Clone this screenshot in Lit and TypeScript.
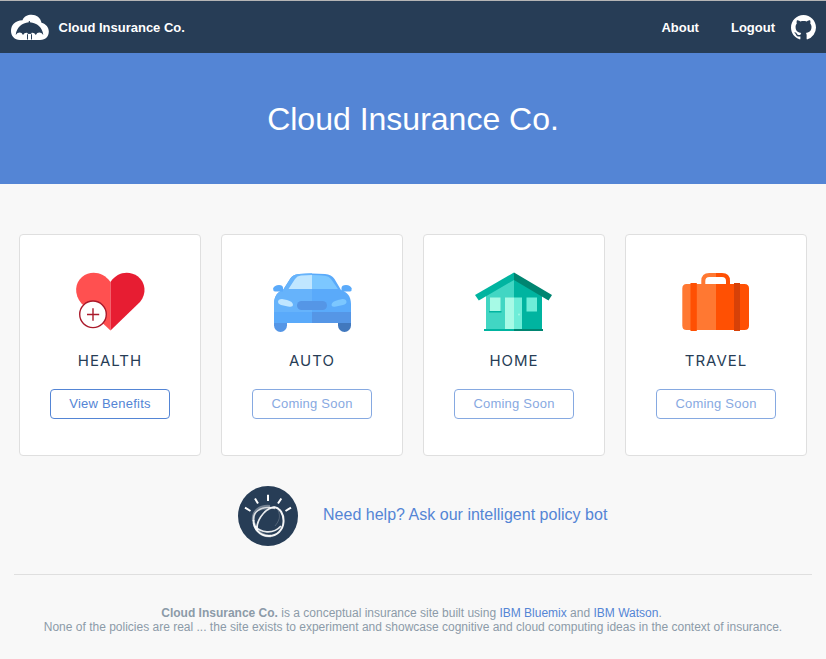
import { LitElement, html, css, svg, SVGTemplateResult } from "lit";
import { customElement, property } from "lit/decorators.js";

const heart = svg`
  <path fill="#ff5050" d="M50.500 70.500L21.500 43.500C13.500 34 15 23 22 17C31 10 43 12 50.500 22Z"/>
  <path fill="#e71d32" d="M50.500 70.500L80 42C87 33.500 85.500 22.500 78 16.500C69 10 57 12 50.500 22Z"/>
  <circle cx="33" cy="54.300" r="13.300" fill="#fff" stroke="#aa1a2b" stroke-width="1.400"/>
  <path d="M27 54.500H39.200M33 48.300V60.700" stroke="#aa1a2b" stroke-width="1.400" fill="none"/>`;

const car = svg`
  <path fill="#5596e6" d="M12 60H25V65.500A6.500 6.500 0 0 1 12 65.500Z"/>
  <path fill="#4178be" d="M76 60H89V65.500A6.500 6.500 0 0 1 76 65.500Z"/>
  <path fill="#5aaafa" d="M12 63V44C12 36 16 31.500 21 30L28 19Q30.500 14.500 37 14Q50 12.800 63 14Q69.500 14.500 72.500 19L79 30C85 32 89 36 89 44V63Z"/>
  <path fill="#66b3fb" d="M12 52V44C12 36 16 31.500 21 30L28 19Q30.500 14.500 37 14Q44 13.300 50 13.300V52Z"/>
  <path fill="#5aaafa" d="M12 52H50V63H12Z"/>
  <path fill="#5596e6" d="M50 52H89V63H50Z"/>
  <path fill="#c0e6ff" d="M26.500 29L33 19Q35 16 39 15.600Q45 15 50 15V29Z"/>
  <path fill="#7cc7ff" d="M50 15Q58 15 63 15.700Q67 16 69 19L76 29H50Z"/>
  <path fill="#5aaafa" d="M11 28.500Q12.500 25 17 25Q21 25 21 28V31.500H13Q11 31 11 28.500Z"/>
  <path fill="#5aaafa" d="M79.500 28Q79.500 25 84 25Q88.500 25 89.700 28.500Q90 31 88 31.500H79.500Z"/>
  <path fill="#c0e6ff" d="M16 42Q16 39 20 39L25 40Q31 41.500 31 45Q31 47.500 26 46.500L19 45Q16 44 16 42Z"/>
  <path fill="#7cc7ff" d="M84.500 42Q84.500 39 80.500 39L76 40Q69.500 41.500 69.500 45Q69.500 47.500 74 46.500L81 45Q84.500 44 84.500 42Z"/>
  <rect x="35" y="41" width="30" height="9" rx="4.500" fill="#5596e6"/>`;

const house = svg`
  <path fill="#41d6c3" d="M22 35L50 18V69H22Z"/>
  <path fill="#00b4a0" d="M50 18L78 35V69H50Z"/>
  <path fill="#00b4a0" d="M50 12.500V20L14.800 40.500L11 35Z"/>
  <path fill="#008571" d="M50 12.500L88 35L84.500 40.500L50 20Z"/>
  <rect x="41" y="37.500" width="9" height="31.500" fill="#a7fae6"/>
  <rect x="50" y="37.500" width="8" height="31.500" fill="#6eedd8"/>
  <rect x="26" y="37.500" width="10.500" height="14" fill="#a7fae6"/>
  <rect x="62.500" y="37.500" width="10.500" height="14" fill="#6eedd8"/>
  <path fill="#00b4a0" d="M25 51H37.500V52.500H25Z"/>
  <circle cx="55" cy="54.500" r=".9" fill="#a7fae6"/>
  <path fill="#00b4a0" d="M20 69H50V71H20Z"/>
  <path fill="#008571" d="M50 69H79V71H50Z"/>`;

const suitcase = svg`
  <path d="M37.300 26V21Q37.300 15 43.300 15H50" fill="none" stroke="#ff7832" stroke-width="4"/>
  <path d="M50 15H56Q62 15 62 21V26" fill="none" stroke="#ff5003" stroke-width="4"/>
  <path fill="#ff7832" d="M50 24H20.500Q16.300 24 16.300 28.500V65.500Q16.300 70 20.500 70H50Z"/>
  <path fill="#ff5003" d="M50 24H78.500Q83 24 83 28.500V65.500Q83 70 78.500 70H50Z"/>
  <rect x="24.500" y="23" width="6.300" height="48" fill="#ff5003"/>
  <rect x="68" y="23" width="6" height="48" fill="#d74108"/>`;

@customElement("policy-card")
class PolicyCard extends LitElement {
  @property() label = "";
  @property() action = "";
  @property({ type: Boolean }) soon = false;
  @property({ attribute: false }) icon?: SVGTemplateResult;

  static styles = css`
    :host {
      display: flex; flex-direction: column; align-items: center;
      box-sizing: border-box; height: 222px; padding-top: 25px;
      background: #fff; border: 1px solid #dfdfdf; border-radius: 4px;
    }
    .icon { width: 100px; height: 80px; flex: none; }
    .label {
      margin-top: 11px; line-height: 20px; font-family: Inter, sans-serif; font-size: 15px;
      letter-spacing: 1px; color: #273d56;
    }
    .button {
      box-sizing: border-box; width: 120px; height: 30px; margin-top: 18px; padding: 0;
      background: #fff; border: 1px solid #5485d5; border-radius: 4px;
      font: 400 13px/28px "Liberation Sans", Arial, sans-serif; letter-spacing: .22px; color: #5485d5;
    }
    .soon { opacity: .7; }
  `;

  render() {
    return html`
      <svg class="icon" viewBox="0 0 100 80">${this.icon}</svg>
      <div class="label">${this.label}</div>
      <button class="button ${this.soon ? "soon" : ""}">${this.action}</button>`;
  }
}

@customElement("app-root")
class AppRoot extends LitElement {
  static styles = css`
    :host {
      display: block; box-sizing: border-box; height: 659px; overflow: hidden;
      background: #f8f8f8; font-family: "Liberation Sans", Arial, sans-serif;
    }
    .bar {
      display: flex; align-items: center; box-sizing: border-box; height: 53px;
      padding: 0 10px 0 11px; border-top: 1px solid #b5b5b5;
      background: #273d56; color: #fff; font-size: 13px; font-weight: 700;
    }
    .logo { width: 38px; height: 26px; margin-right: 9.500px; }
    .brand { flex: 1; }
    .link { margin-right: 32px; }
    .link.last { margin-right: 16px; }
    .github { width: 25px; height: 25px; }
    .hero {
      display: flex; align-items: center; justify-content: center; box-sizing: border-box;
      height: 131px; padding-top: 2px;
      background: #5485d5; color: #fff; font-size: 32px;
    }
    .title { margin: 0; font-size: inherit; font-weight: 400; }
    .cards {
      display: grid; grid-template-columns: repeat(4, 182px); gap: 20px;
      padding: 50px 0 0 19px;
    }
    .help { display: flex; align-items: center; height: 60px; margin: 30px 0 0 238px; }
    .bot { width: 60px; height: 60px; margin-right: 25px; }
    .ask { color: #5485d5; font-size: 16px; letter-spacing: .015px; margin-top: -2px; white-space: nowrap; }
    .footer {
      margin: 28px 14px 0; padding-top: 31px; border-top: 1px solid #dfdfdf;
      text-align: center; color: #8c9ba8; font-size: 12px; line-height: 14px; white-space: nowrap;
    }
    .about { padding-right: 3px; }
    .blue { color: #5485d5; }
  `;

  render() {
    return html`
      <header class="bar">
        <svg class="logo" viewBox="0 0 38 26">
          <path fill="#fff" d="M9 26C3.500 26 0 21.800 0 17C0 11 4 6.500 11.500 6.200C13 2.500 16.500 .8 20.500 .8C25.500 .8 29.500 3.500 30.500 8.800C35 10 37.800 13.500 37.800 17.500C37.800 22 35 26 29 26Z"/>
          <path fill="#273d56" d="M4.700 21C5.500 13.500 11 8.800 17.800 8.200V7H18.900V8.200C26 8.800 31.500 13.500 32.300 21Q30.500 18.600 28.300 18.600Q26 18.600 24.800 21Q23.500 18.800 21.500 18.800Q19.800 18.800 18.500 20Q17 18.800 15.300 18.800Q13.300 18.800 12 21Q10.800 18.600 8.700 18.600Q6.400 18.600 4.700 21Z"/>
          <path fill="none" d="M16.500 25.500V20.500Q16.500 19 18.500 19Q20.500 19 20.500 20.500V25.500" stroke="#273d56" stroke-width="1"/>
          <path d="M18.500 20V26" stroke="#fff" stroke-width="2.600"/>
        </svg>
        <span class="brand">Cloud Insurance Co.</span>
        <span class="link">About</span>
        <span class="link last">Logout</span>
        <svg class="github" viewBox="0 0 16 16"><path fill="#fff" fill-rule="evenodd" d="M8 0C3.580 0 0 3.580 0 8c0 3.540 2.290 6.530 5.470 7.590.4.070.55-.17.55-.38 0-.19-.01-.82-.01-1.490-2.010.37-2.530-.49-2.690-.94-.09-.23-.48-.94-.82-1.130-.28-.15-.68-.52-.01-.53.63-.01 1.080.58 1.230.82.72 1.210 1.870.87 2.330.66.07-.52.28-.87.51-1.070-1.780-.2-3.640-.89-3.640-3.950 0-.87.31-1.590.82-2.150-.08-.2-.36-1.020.08-2.120 0 0 .67-.21 2.200.82.64-.18 1.320-.27 2-.27s1.360.09 2 .27c1.530-1.040 2.200-.82 2.200-.82.44 1.100.16 1.920.08 2.120.51.56.82 1.270.82 2.150 0 3.070-1.870 3.750-3.650 3.950.29.25.54.73.54 1.480 0 1.070-.01 1.930-.01 2.200 0 .21.15.46.55.38A8.010 8.010 0 0 0 16 8c0-4.420-3.580-8-8-8Z"/></svg>
      </header>
      <section class="hero"><h1 class="title">Cloud Insurance Co.</h1></section>
      <main>
        <section class="cards">
          <policy-card label="HEALTH" action="View Benefits" .icon=${heart}></policy-card>
          <policy-card label="AUTO" action="Coming Soon" soon .icon=${car}></policy-card>
          <policy-card label="HOME" action="Coming Soon" soon .icon=${house}></policy-card>
          <policy-card label="TRAVEL" action="Coming Soon" soon .icon=${suitcase}></policy-card>
        </section>
        <section class="help">
          <svg class="bot" viewBox="0 0 60 60" fill="none" stroke="#fff">
            <circle cx="30" cy="30" r="30" fill="#273d56" stroke="none"/>
            <path stroke-width="2" d="M30 8.700V15M17 12.500L20 17.500M43.300 12.500L40 17.500M7 21.700L12.500 25M53 21.700L47.500 25"/>
            <path stroke-width="3" opacity=".35" d="M15.500 35C14 25 22 19.500 32 20.500M16 37C18 46 25 50.500 33 50"/>
            <path stroke-width="2" opacity=".95" d="M36 21C42 22 46 28 45.500 36C45 44 39 50 31 50C22 50 15.500 43 15.500 34"/>
            <path stroke-width="1.800" opacity=".9" d="M19.500 44C17.500 37 25 23 36 21M17 40C22 46.500 35 49 43 40"/>
            <path stroke-width="1.500" opacity=".75" d="M15.500 34C15 26 22 21.500 31 21.500Q34 21.500 37 22.500"/>
            <path stroke-width="1" opacity=".2" d="M40 24C43 31 41 35 37 40M16 28C20 23 27 23 31 24"/>
          </svg>
          <span class="ask">Need help? Ask our intelligent policy bot</span>
        </section>
      </main>
      <footer class="footer">
        <div class="about"><b>Cloud Insurance Co.</b> is a conceptual insurance site built using <span class="blue">IBM Bluemix</span> and <span class="blue">IBM Watson</span>.</div>
        <div>None of the policies are real ... the site exists to experiment and showcase cognitive and cloud computing ideas in the context of insurance.</div>
      </footer>`;
  }
}
